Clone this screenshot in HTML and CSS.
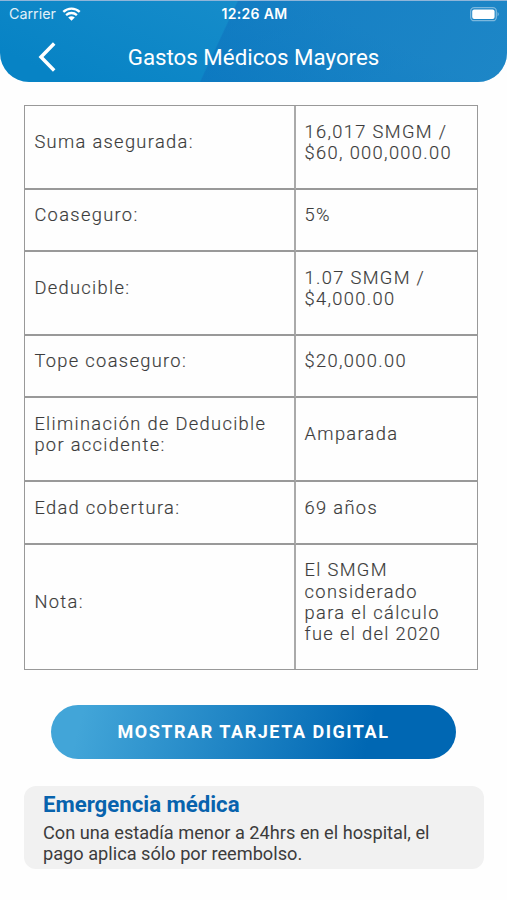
FILE: index.html
```html
<!DOCTYPE html>
<html lang="es">
<head>
<meta charset="utf-8">
<title>Gastos Médicos Mayores</title>
<link rel="stylesheet" href="styles.css">
</head>
<body>
<header class="header">
  <div class="status">
    <div class="carrier"><span class="carrier-name">Carrier</span>
      <svg class="wifi" width="19" height="14" viewBox="0 0 19 14"><path d="M1.3 4.9C6 .5 13 .5 17.7 4.9" fill="none" stroke="#fff" stroke-width="2.4"/><path d="M4.1 8.1c3.1-2.8 7.7-2.8 10.8 0" fill="none" stroke="#fff" stroke-width="2.3"/><path d="M9.5 13.8 6.2 10.4q3.3-2.5 6.6 0z" fill="#fff"/></svg>
    </div>
    <span class="time">12:26 AM</span>
    <svg class="battery" width="30" height="15" viewBox="0 0 30 15"><rect x=".7" y=".7" width="25.6" height="13" rx="3.5" fill="none" stroke="#fff" stroke-opacity=".42" stroke-width="1.3"/><rect x="2.2" y="2.4" width="22.4" height="9.6" rx="2" fill="#fff"/><path d="M27.6 5q2.2 2.2 0 4.4z" fill="#fff" fill-opacity=".5"/></svg>
  </div>
  <div class="nav">
    <svg class="back" width="18" height="30" viewBox="0 0 18 30"><path d="M16.2 1.5 3 15l13.2 13.5" fill="none" stroke="#fff" stroke-width="3.5"/></svg>
    <h1 class="title">Gastos Médicos Mayores</h1>
  </div>
</header>
<main class="main">
  <div class="table">
    <div class="cell">Suma asegurada:</div><div class="cell">16,017 SMGM /<br>$60, 000,000.00</div>
    <div class="cell">Coaseguro:</div><div class="cell">5%</div>
    <div class="cell">Deducible:</div><div class="cell">1.07 SMGM /<br>$4,000.00</div>
    <div class="cell">Tope coaseguro:</div><div class="cell">$20,000.00</div>
    <div class="cell">Eliminación de Deducible<br>por accidente:</div><div class="cell">Amparada</div>
    <div class="cell">Edad cobertura:</div><div class="cell">69 años</div>
    <div class="cell">Nota:</div><div class="cell">El SMGM<br>considerado<br>para el cálculo<br>fue el del 2020</div>
  </div>
  <button class="button">MOSTRAR TARJETA DIGITAL</button>
  <section class="notice">
    <h2 class="notice-title">Emergencia médica</h2>
    <p class="notice-text">Con una estadía menor a 24hrs en el hospital, el<br>pago aplica sólo por reembolso.</p>
  </section>
</main>
</body>
</html>
```

FILE: styles.css
```css
* { box-sizing: border-box; }
body { margin: 0; background: #fefefe; font-family: Roboto, sans-serif; color: #3c3c3c; }
.header {
  height: 82px;
  border-top: 1px solid #8fb5d9;
  border-radius: 0 0 29px 29px;
  color: #fff;
  background:
    linear-gradient(115deg, transparent 43.5%, rgba(12, 98, 182, .36) 43.8%, rgba(36, 122, 192, .38) 100%),
    linear-gradient(25deg, #0783c5 10%, #198ecb 70%);
}
.status { display: grid; grid-template-columns: 1fr auto 1fr; align-items: center; height: 26px; padding: 0 7px 0 9px; }
.carrier { display: flex; align-items: center; gap: 6px; font: 14.3px/20px Inter, sans-serif; }
.carrier-name { opacity: .88; }
.time { font: 600 14px/20px Inter, sans-serif; letter-spacing: .3px; }
.battery { justify-self: end; }
.nav { display: grid; grid-template-columns: 56px 1fr 56px; align-items: center; height: 59px; }
.back { justify-self: end; }
.title { margin: 0; text-align: center; font-size: 22.3px; font-weight: 400; line-height: 30px; }
.main { padding: 23px 23px 0 24px; }
.table {
  display: grid;
  grid-template-columns: 271px 181px;
  grid-template-rows: 84px 62px 84px 62px 84px 63px 124px;
  width: 454px;
  border: 1px solid #999;
}
.cell {
  display: flex;
  align-items: center;
  padding: 0 0 10px 9.4px;
  border-bottom: 2px solid #999;
  font-size: 18.3px;
  font-weight: 300;
  line-height: 21.3px;
  letter-spacing: 1.33px;
  white-space: nowrap;
  -webkit-text-stroke: .15px #3c3c3c;
}
.cell:nth-child(odd) { border-right: 2px solid #aaa; }
.cell:nth-child(even) { padding-left: 8.6px; }
.cell:nth-last-child(-n+2) { border-bottom: 0; }
.button {
  display: block;
  width: 405px;
  height: 54px;
  margin: 35px 0 0 27px;
  padding: 0;
  border: 0;
  border-radius: 27px;
  background: linear-gradient(105deg, #42a5d8 8%, #0067b3 78%);
  color: #fff;
  font: 700 18px/54px Roboto, sans-serif;
  letter-spacing: 1.53px;
}
.notice { height: 83px; margin-top: 27px; padding: 4px 19px 0; border-radius: 12px; background: #f1f1f1; }
.notice-title { margin: 0; color: #0863ad; font-size: 22.2px; font-weight: 700; line-height: 28px; }
.notice-text { margin: 4px 0 0; font-size: 18.2px; line-height: 21.3px; white-space: nowrap; }
```
